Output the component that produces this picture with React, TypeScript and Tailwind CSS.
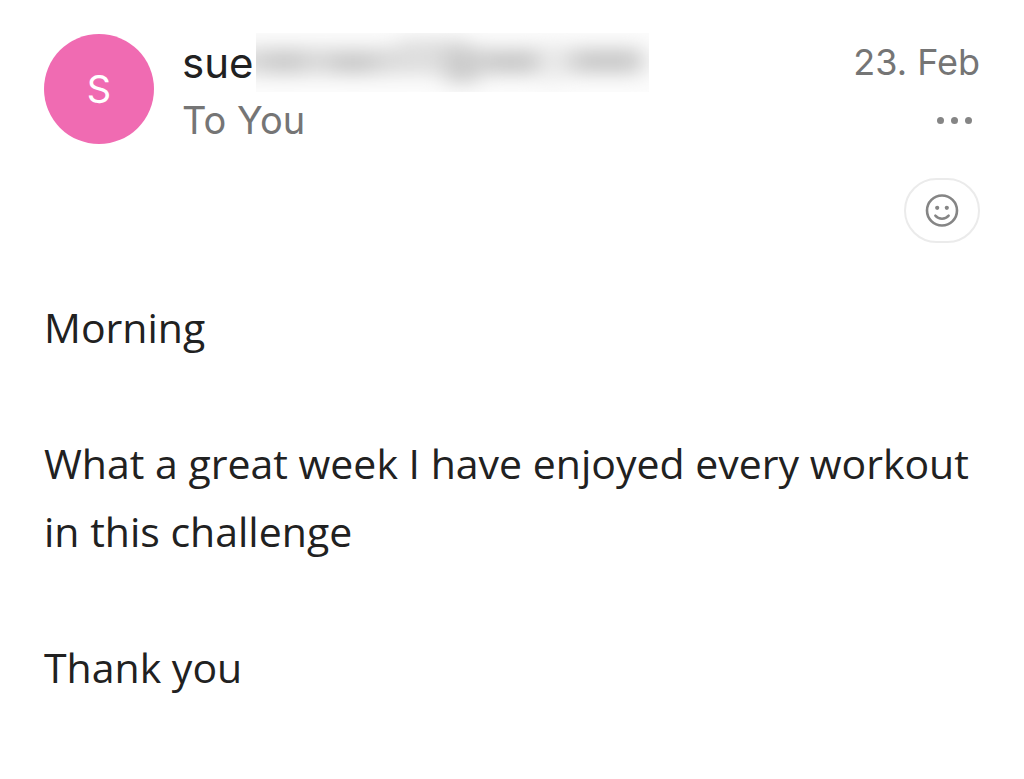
import React from 'react';

const message = ['Morning', 'What a great week I have enjoyed every workout in this challenge', 'Thank you'];

const RedactedAddress = () => (
  <span
    role="img"
    aria-label="Hidden address"
    className="w-[393px] h-[59px] shrink overflow-hidden bg-[#fcfcfc]"
  >
    <svg className="w-full h-full" viewBox="0 0 393 59" preserveAspectRatio="none">
      <defs>
        <filter id="soft" x="-20%" y="-100%" width="140%" height="300%">
          <feGaussianBlur stdDeviation="11 9" />
        </filter>
      </defs>
      <g filter="url(#soft)">
        <rect x="-30" y="14" width="418" height="28" fill="#dadada" />
        <rect x="8" y="17" width="40" height="24" fill="#cccccc" />
        <rect x="76" y="22" width="42" height="18" fill="#c8c8c8" />
        <rect x="142" y="6" width="70" height="36" fill="#dedede" />
        <rect x="190" y="14" width="32" height="36" fill="#cacaca" />
        <rect x="230" y="20" width="50" height="20" fill="#c8c8c8" />
        <rect x="288" y="8" width="18" height="44" fill="#f0f0f0" />
        <rect x="322" y="18" width="62" height="20" fill="#c8c8c8" />
      </g>
    </svg>
  </span>
);

const App = () => {
  return (
    <main className="min-h-screen bg-white px-11 pt-8 pb-10 text-[#212121]">
      <header className="flex items-start font-['Inter',sans-serif]">
        <div className="mt-[2px] w-[110px] h-[110px] shrink-0 rounded-full bg-[#f06bb2] flex items-center justify-center text-white text-[38px]">
          S
        </div>

        <div className="ml-7 min-w-0 flex-1">
          <h1 className="flex items-center gap-[2px] h-[60px] text-[42px]">
            sue
            <RedactedAddress />
          </h1>
          <p className="text-[38px] leading-[56px] text-[#757575]">To You</p>
        </div>

        <div className="ml-4 shrink-0 flex flex-col items-end">
          <time className="text-[36px] leading-[60px] text-[#757575]">23. Feb</time>
          <button type="button" aria-label="More" className="mr-2 h-[56px] flex items-center gap-[7px]">
            <span className="w-[7px] h-[7px] rounded-full bg-[#858585]" />
            <span className="w-[7px] h-[7px] rounded-full bg-[#858585]" />
            <span className="w-[7px] h-[7px] rounded-full bg-[#858585]" />
          </button>
          <button
            type="button"
            aria-label="Add reaction"
            className="mt-[30px] w-[76px] h-[65px] rounded-full border-2 border-[#ebebeb] flex items-center justify-center"
          >
            <svg width="34" height="34" viewBox="0 0 34 34" fill="none" stroke="#858585" strokeLinecap="round">
              <circle cx="17" cy="16.5" r="15" strokeWidth="2.6" />
              <path d="M10.3 21.6c3.5 4.1 9.9 4.1 13.4 0" strokeWidth="2.4" />
              <circle cx="12.2" cy="13.8" r="2.1" fill="#858585" stroke="none" />
              <circle cx="21.8" cy="13.8" r="2.1" fill="#858585" stroke="none" />
            </svg>
          </button>
        </div>
      </header>

      <article className="mt-[50px] space-y-[68px] font-['Open_Sans',sans-serif] text-[41px] leading-[68px]">
        {message.map((line) => (
          <p key={line}>{line}</p>
        ))}
      </article>
    </main>
  );
};

export default App;
